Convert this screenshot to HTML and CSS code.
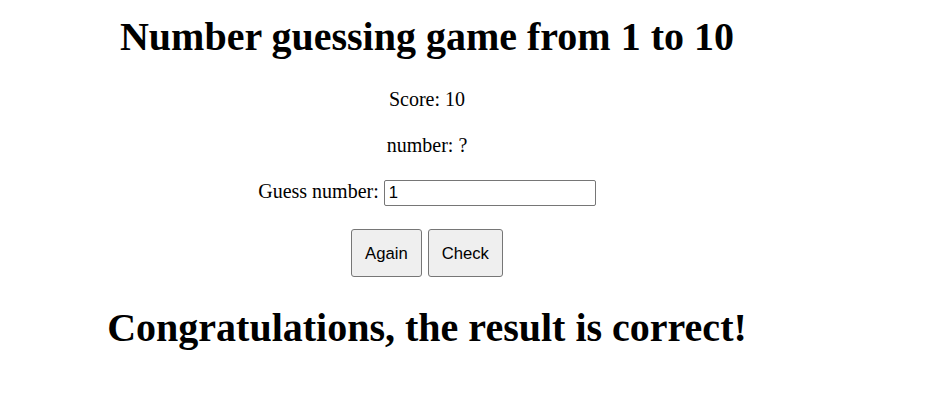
FILE: index.html
```html
<!DOCTYPE html>
<html>
<head>
<meta charset="utf-8">
<link rel="stylesheet" href="styles.css">
</head>
<body>
<div class="game">
  <h1 class="title">Number guessing game from 1 to 10</h1>
  <p class="line">Score: <span>10</span></p>
  <p class="line">number: <span>?</span></p>
  <p class="line">Guess number: <input class="guess" type="text" value="1"></p>
  <div class="buttons">
    <button class="btn">Again</button>
    <button class="btn">Check</button>
  </div>
  <h1 class="result">Congratulations, the result is correct!</h1>
</div>
</body>
</html>
```
FILE: styles.css
```css
body {
  margin: 8px;
  font-family: "Liberation Serif", "Times New Roman", serif;
  font-size: 20px;
  color: #000;
  background: #fff;
}
.game {
  width: 838px;
  padding-top: 6px;
  text-align: center;
}
.title {
  font-size: 40px;
  line-height: 46px;
  margin: 0 0 28px;
}
.line {
  margin: 0 0 23px;
  line-height: 23px;
}
.guess {
  width: 202px;
  height: 24px;
  padding: 0 4px;
  border: 1px solid #767676;
  border-radius: 2px;
  font-family: "Liberation Sans", Arial, sans-serif;
  font-size: 16.67px;
  color: #000;
  box-sizing: content-box;
  margin: 0;
  vertical-align: baseline;
}
.buttons {
  display: flex;
  justify-content: center;
  gap: 6px;
}
.btn {
  font-family: "Liberation Sans", Arial, sans-serif;
  font-size: 16.67px;
  padding: 1px 13px 0;
  height: 48px;
  background: #efefef;
  border: 1px solid #767676;
  border-radius: 3px;
  color: #000;
}
.result {
  font-size: 40px;
  line-height: 46px;
  margin: 28px 0 0;
}
```
